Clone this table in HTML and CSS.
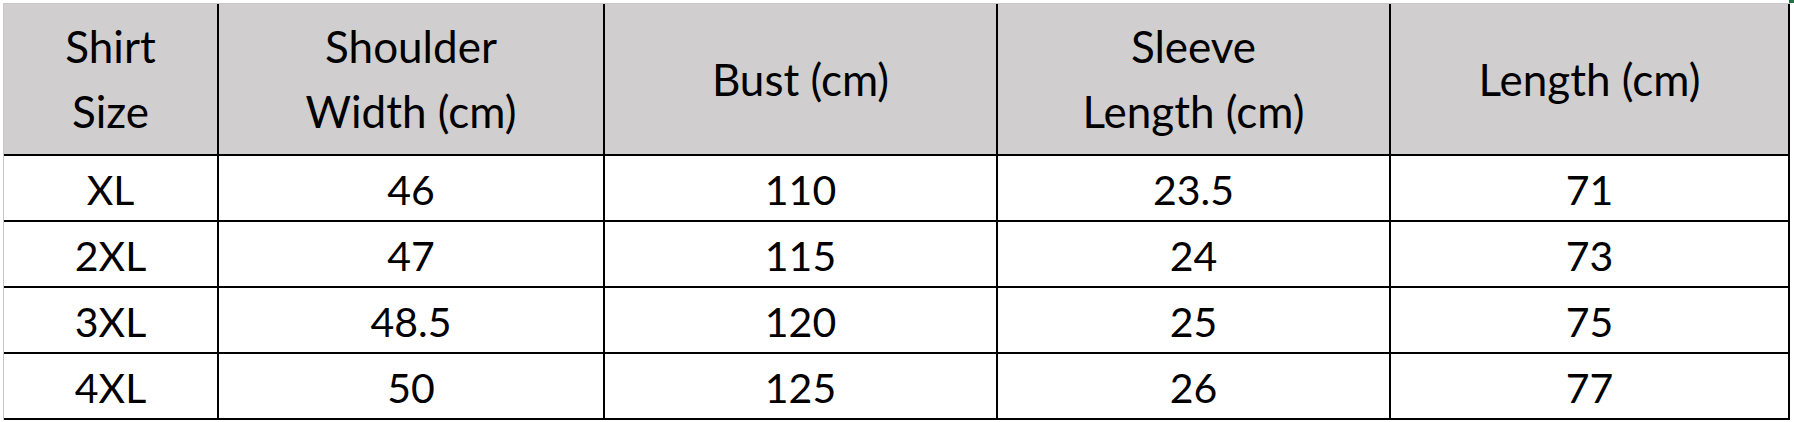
FILE: index.html
```html
<!DOCTYPE html>
<html lang="en">
<head>
<meta charset="utf-8">
<title>Shirt Size Chart</title>
<link rel="stylesheet" href="styles.css">
</head>
<body>
<div class="sheet">
  <div class="size-table">
    <div class="cell head"><span>Shirt<br>Size</span></div>
    <div class="cell head"><span>Shoulder<br>Width (cm)</span></div>
    <div class="cell head"><span>Bust (cm)</span></div>
    <div class="cell head"><span>Sleeve<br>Length (cm)</span></div>
    <div class="cell head"><span>Length (cm)</span></div>

    <div class="cell">XL</div>
    <div class="cell">46</div>
    <div class="cell">110</div>
    <div class="cell">23.5</div>
    <div class="cell">71</div>

    <div class="cell">2XL</div>
    <div class="cell">47</div>
    <div class="cell">115</div>
    <div class="cell">24</div>
    <div class="cell">73</div>

    <div class="cell">3XL</div>
    <div class="cell">48.5</div>
    <div class="cell">120</div>
    <div class="cell">25</div>
    <div class="cell">75</div>

    <div class="cell">4XL</div>
    <div class="cell">50</div>
    <div class="cell">125</div>
    <div class="cell">26</div>
    <div class="cell">77</div>
  </div>
  <div class="sel-mark"></div>
</div>
</body>
</html>
```

FILE: styles.css
```css
html, body {
  margin: 0;
  padding: 0;
  background: #ffffff;
}

.sheet {
  position: relative;
  padding: 3px 0 0 3px;
  width: 1794px;
  height: 422px;
  box-sizing: border-box;
}

.size-table {
  display: grid;
  grid-template-columns: 215px 386px 393px 393px 399px;
  grid-template-rows: 152px 66px 66px 66px 66px;
  border-left: 1px solid #c8c8c8;
  border-top: 1px solid #c8c8c8;
  width: max-content;
  font-family: "Lato", "Liberation Sans", sans-serif;
  font-size: 41px;
  color: #000000;
}

.cell {
  box-sizing: border-box;
  border-right: 2px solid #000000;
  border-bottom: 2px solid #000000;
  display: flex;
  align-items: center;
  justify-content: center;
  text-align: center;
  line-height: 1;
  padding-top: 2px;
}

.head {
  background: #d0cece;
  font-size: 44px;
  line-height: 65px;
  padding-top: 0;
}

.sel-mark {
  position: absolute;
  top: 0;
  left: 1789px;
  width: 5px;
  height: 3px;
  background: #217346;
}
```
